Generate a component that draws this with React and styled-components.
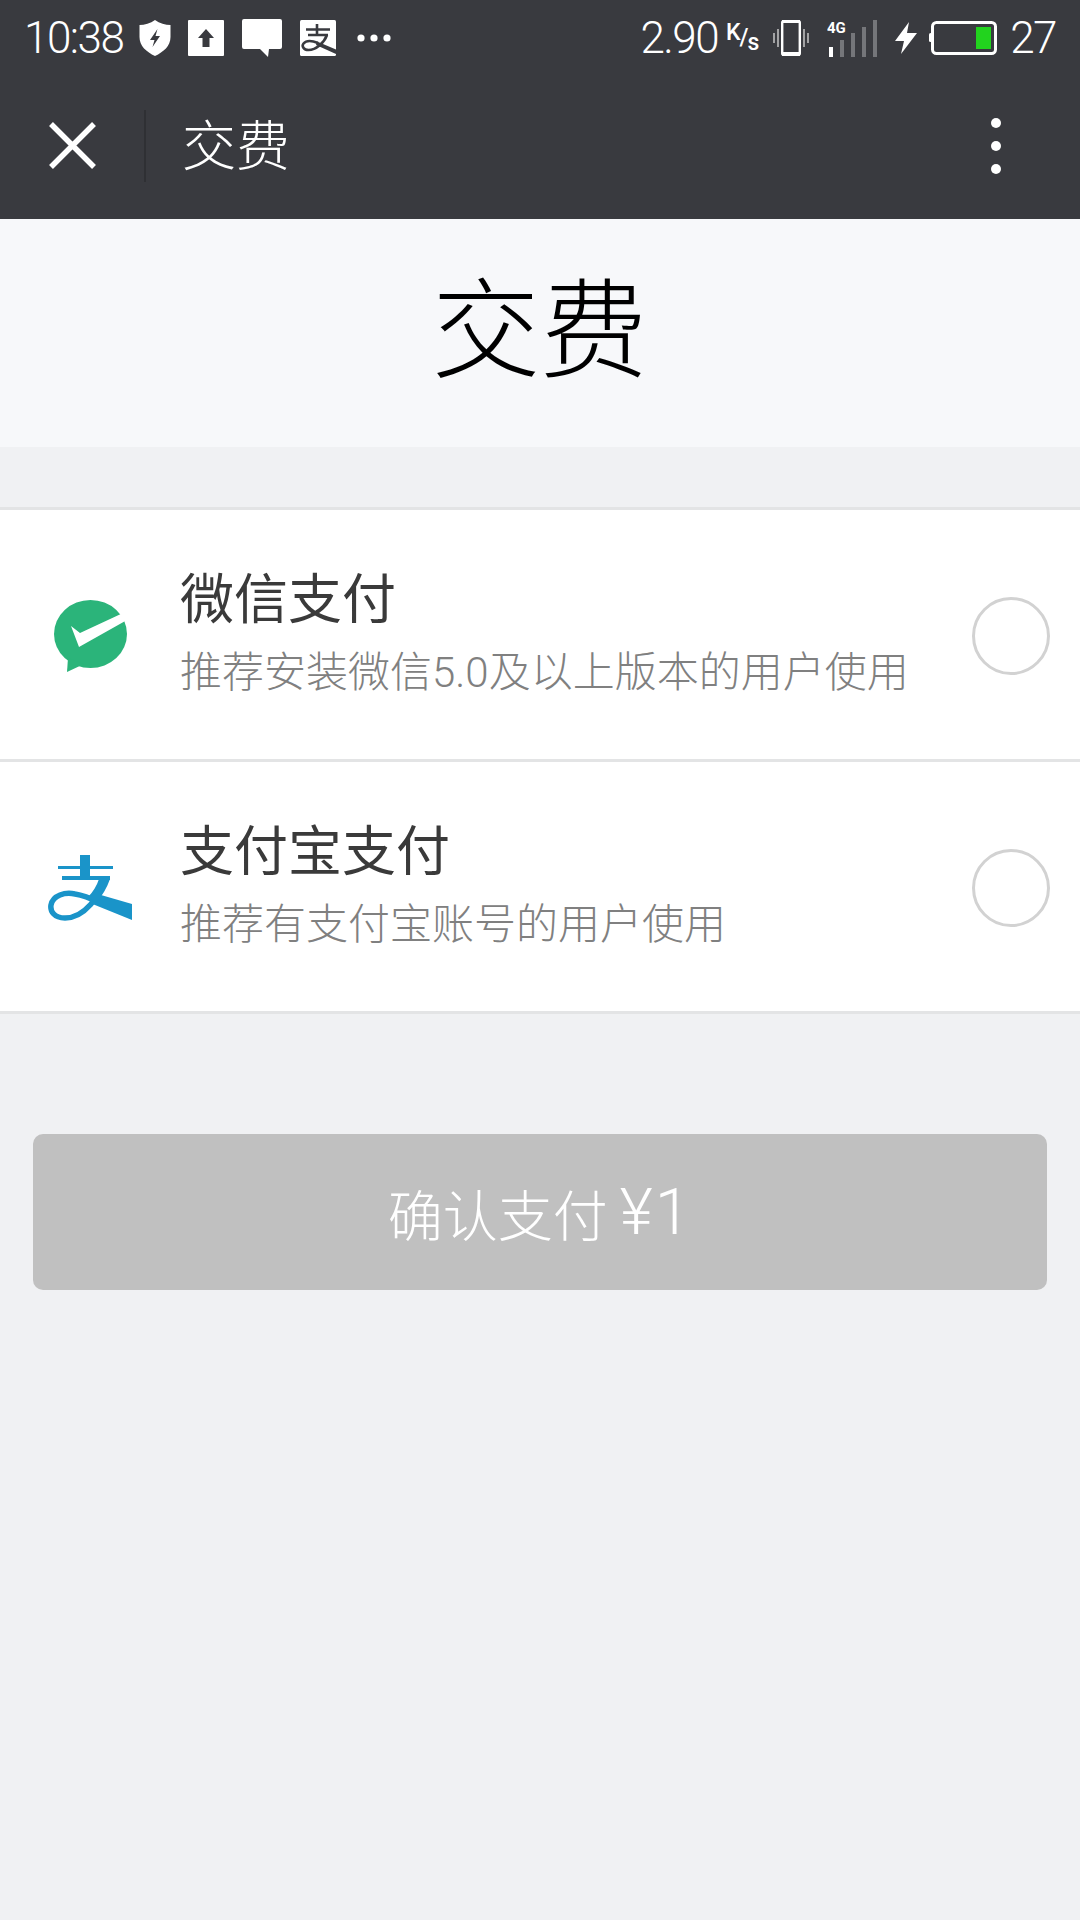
import React from 'react';
import styled, { createGlobalStyle } from 'styled-components';

const GlobalStyle = createGlobalStyle`
  html, body {
    margin: 0;
    padding: 0;
    background: #f0f1f3;
    font-family: "Noto Sans CJK SC", "Noto Sans", sans-serif;
  }
`;

const Page = styled.div`
  width: 1080px;
  height: 1920px;
  overflow: hidden;
  background: #f0f1f3;
`;

// Status bar
const StatusBar = styled.div`
  height: 72px;
  box-sizing: border-box;
  background: #393a3f;
  display: flex;
  align-items: center;
  justify-content: space-between;
  padding: 4px 24px 0 24px;
  color: #fff;
`;

const StatusGroup = styled.div`
  display: flex;
  align-items: center;
`;

const StatusText = styled.span`
  font-family: Roboto, sans-serif;
  font-weight: 300;
  font-size: 44px;
  line-height: 68px;
  letter-spacing: -1.5px;
  margin-left: ${({ $ml }) => $ml || 0}px;
`;

const StatusIcon = styled.svg`
  display: block;
  flex: none;
  margin-left: ${({ $ml }) => $ml || 0}px;
`;

const SpeedUnit = styled.span`
  font-family: Roboto, sans-serif;
  font-weight: 500;
  width: 32px;
  height: 36px;
  margin-left: 8px;
  display: flex;
  align-items: center;
  justify-content: center;
  font-size: 23px;
  line-height: 36px;
  letter-spacing: -1px;
`;

const UnitPart = styled.span`
  transform: translateY(${({ $y }) => $y}px);
`;

// Nav bar
const NavBar = styled.div`
  height: 147px;
  background: #393a3f;
  display: flex;
  align-items: center;
  color: #fff;
  box-sizing: border-box;
  padding: 0 0 0 49px;
`;

const NavDivider = styled.div`
  width: 2px;
  height: 72px;
  background: #2f3034;
  margin-left: 48px;
`;

const NavTitle = styled.div`
  flex: 1;
  margin-left: 36px;
  margin-bottom: 5px;
  font-size: 54px;
  line-height: 60px;
  font-weight: 300;
`;

const MoreButton = styled.div`
  width: 10px;
  margin-right: 79px;
  display: flex;
  flex-direction: column;
  gap: 13px;
`;

const MoreDot = styled.span`
  width: 10px;
  height: 10px;
  border-radius: 50%;
  background: #fff;
`;

// Page heading
const Heading = styled.h1`
  margin: 0;
  height: 228px;
  box-sizing: border-box;
  padding-bottom: 23px;
  background: #f7f8fa;
  color: #000;
  display: flex;
  align-items: center;
  justify-content: center;
  font-size: 108px;
  font-weight: 300;
`;

// Payment list
const PayList = styled.div`
  margin-top: 60px;
  background: #fff;
  border-top: 3px solid #e3e4e5;
`;

const PayRow = styled.div`
  height: 249px;
  border-bottom: 3px solid #e3e4e5;
  display: flex;
  align-items: center;
  padding-right: 30px;
`;

const LogoSlot = styled.div`
  width: 180px;
  flex: none;
  display: flex;
  padding-left: ${({ $pl }) => $pl}px;
  padding-top: 2px;
  box-sizing: border-box;
`;

const PayText = styled.div`
  flex: 1;
  display: flex;
  flex-direction: column;
  padding-bottom: 6px;
`;

const PayTitle = styled.div`
  font-size: 54px;
  line-height: 68px;
  font-weight: 400;
  color: #3a3a3a;
`;

const PayDesc = styled.div`
  font-family: Roboto, "Noto Sans CJK SC", sans-serif;
  font-size: 42px;
  line-height: 56px;
  font-weight: 300;
  color: #808080;
  margin-top: 15px;
`;

const Radio = styled.div`
  width: 78px;
  height: 78px;
  margin-top: 2px;
  box-sizing: border-box;
  border: 3px solid #d2d2d2;
  border-radius: 50%;
  background: #fff;
`;

const ConfirmButton = styled.button`
  display: flex;
  align-items: center;
  justify-content: center;
  width: 1014px;
  height: 156px;
  margin: 120px 33px 0;
  border: none;
  border-radius: 10px;
  background: #c0c0c0;
  color: #fff;
  font-family: "Noto Sans CJK SC", sans-serif;
  font-size: 55px;
  font-weight: 300;
  padding: 0;
`;

const Amount = styled.span`
  font-family: Roboto, "Noto Sans CJK SC", sans-serif;
  font-size: 64px;
  font-weight: 300;
  letter-spacing: 2px;
  margin-left: 12px;
`;

const Shield = () => (
  <StatusIcon $ml={16} width="32" height="36" viewBox="0 0 31 36">
    <path d="M15.5 0 C20 3.5 26 5 31 5 V17 C31 26 24 32 15.5 36 C7 32 0 26 0 17 V5 C5 5 11 3.5 15.5 0 Z" fill="#fff" />
    <path d="M18 9 L10.5 20 H15 L13 27 L20.5 16 H16 Z" fill="#393a3f" />
  </StatusIcon>
);

const UploadSquare = () => (
  <StatusIcon $ml={17} width="36" height="36" viewBox="0 0 36 36">
    <rect width="36" height="36" rx="1" fill="#fff" />
    <path d="M18 9 L26 18 H21.5 V27 H14.5 V18 H10 Z" fill="#393a3f" />
  </StatusIcon>
);

const Message = () => (
  <StatusIcon $ml={18} width="40" height="38" viewBox="0 0 40 38">
    <path d="M2 0 H38 A2 2 0 0 1 40 2 V28 A2 2 0 0 1 38 30 H27 L26 38 L18 30 H2 A2 2 0 0 1 0 28 V2 A2 2 0 0 1 2 0 Z" fill="#fff" />
  </StatusIcon>
);

const AlipaySquare = () => (
  <StatusIcon $ml={18} width="36" height="36" viewBox="0 0 36 36">
    <rect width="36" height="36" rx="1.5" fill="#fff" />
    <path d="M6 9.5 H30 M8 15 H28 M17 4 V15 M27 15 C24 23 16 30 8.5 30 C3.5 30 1.5 26 3.5 23.5 C6.5 20 13 21 18 23" fill="none" stroke="#393a3f" strokeWidth="2.6" />
    <path d="M17 21.5 L36 29.5 V34 L16 25 Z" fill="#393a3f" />
  </StatusIcon>
);

const Ellipsis = () => (
  <StatusIcon $ml={21} width="34" height="8" viewBox="0 0 34 8">
    <circle cx="4" cy="4" r="3.6" fill="#fff" />
    <circle cx="17" cy="4" r="3.6" fill="#fff" />
    <circle cx="30" cy="4" r="3.6" fill="#fff" />
  </StatusIcon>
);

const Vibrate = () => (
  <StatusIcon $ml={15} width="36" height="36" viewBox="0 0 36 36">
    <rect x="9.2" y="1.2" width="17.6" height="33.6" rx="1.5" fill="none" stroke="#fff" strokeWidth="2.4" />
    <rect x="9" y="0" width="18" height="3" fill="#fff" />
    <rect x="9" y="32" width="18" height="4" fill="#fff" />
    <path d="M1 13 V23 M5 9 V27 M31 9 V27 M35 13 V23" stroke="#bdbdbe" strokeWidth="1.6" />
  </StatusIcon>
);

const Signal = () => (
  <StatusIcon $ml={18} width="50" height="37" viewBox="0 0 50 37">
    <text x="0" y="13" fontFamily="Roboto, sans-serif" fontWeight="700" fontSize="15" fill="#fff">4G</text>
    <rect x="2" y="27" width="4" height="10" fill="#fff" />
    <rect x="13" y="20" width="4" height="17" fill="#75767a" />
    <rect x="24" y="13" width="4" height="24" fill="#75767a" />
    <rect x="35" y="7" width="4" height="30" fill="#75767a" />
    <rect x="46" y="0" width="4" height="37" fill="#75767a" />
  </StatusIcon>
);

const Bolt = () => (
  <StatusIcon $ml={18} width="22" height="32" viewBox="0 0 22 32">
    <path d="M14 0 L0 19 H9 L6 32 L22 11 H12 Z" fill="#fff" />
  </StatusIcon>
);

const Battery = () => (
  <StatusIcon $ml={12} width="68" height="34" viewBox="0 0 68 34">
    <rect x="0" y="12" width="3" height="9" rx="1.5" fill="#fff" />
    <rect x="3.5" y="1.5" width="63" height="31" rx="4" fill="none" stroke="#fff" strokeWidth="3" />
    <rect x="47" y="6" width="15" height="22" fill="#22d31e" />
  </StatusIcon>
);

const CloseIcon = () => (
  <StatusIcon width="47" height="47" viewBox="0 0 47 47">
    <path d="M2 2 L45 45 M45 2 L2 45" stroke="#fff" strokeWidth="5.5" />
  </StatusIcon>
);

const WechatLogo = () => (
  <StatusIcon width="73" height="72" viewBox="0 0 73 72">
    <ellipse cx="36.5" cy="34" rx="36.5" ry="34" fill="#2bb47a" />
    <path d="M14 58 L13 72 L30 64 Z" fill="#2bb47a" />
    <path d="M17 26 L26 33 L69 13 L73 20 L25 47 Z" fill="#fff" />
  </StatusIcon>
);

const AlipayLogo = () => (
  <StatusIcon width="84" height="66" viewBox="18 22 84 66">
    <rect x="50" y="22" width="10" height="22" fill="#1a94c9" />
    <rect x="28" y="33" width="55" height="3" fill="#1a94c9" />
    <rect x="32" y="43" width="48" height="4" fill="#1a94c9" />
    <path d="M75 46 C70 62 55 85 35 85 C24 85 20 78 21 72 C23 62 35 59 45 61 C52 62 60 65 70 70" fill="none" stroke="#1a94c9" strokeWidth="5.5" />
    <path d="M64 60 L102 71 L102 87 L60 70 Z" fill="#1a94c9" />
    <path d="M69 46 H80 C77 55 72 63 66 70 L58 64 C63 59 67 52 69 46 Z" fill="#1a94c9" />
  </StatusIcon>
);

const methods = [
  { title: '微信支付', desc: '推荐安装微信5.0及以上版本的用户使用', logo: <WechatLogo />, pl: 54 },
  { title: '支付宝支付', desc: '推荐有支付宝账号的用户使用', logo: <AlipayLogo />, pl: 48 },
];

const App = () => (
  <Page>
    <GlobalStyle />
    <StatusBar>
      <StatusGroup>
        <StatusText>10:38</StatusText>
        <Shield />
        <UploadSquare />
        <Message />
        <AlipaySquare />
        <Ellipsis />
      </StatusGroup>
      <StatusGroup>
        <StatusText>2.90</StatusText>
        <SpeedUnit>
          <UnitPart $y={-5}>K</UnitPart>
          <UnitPart $y={0}>/</UnitPart>
          <UnitPart $y={5}>s</UnitPart>
        </SpeedUnit>
        <Vibrate />
        <Signal />
        <Bolt />
        <Battery />
        <StatusText $ml={13}>27</StatusText>
      </StatusGroup>
    </StatusBar>
    <NavBar>
      <CloseIcon />
      <NavDivider />
      <NavTitle>交费</NavTitle>
      <MoreButton>
        <MoreDot />
        <MoreDot />
        <MoreDot />
      </MoreButton>
    </NavBar>
    <Heading>交费</Heading>
    <PayList>
      {methods.map((m) => (
        <PayRow key={m.title}>
          <LogoSlot $pl={m.pl}>{m.logo}</LogoSlot>
          <PayText>
            <PayTitle>{m.title}</PayTitle>
            <PayDesc>{m.desc}</PayDesc>
          </PayText>
          <Radio />
        </PayRow>
      ))}
    </PayList>
    <ConfirmButton>
      确认支付<Amount>¥1</Amount>
    </ConfirmButton>
  </Page>
);

export default App;
